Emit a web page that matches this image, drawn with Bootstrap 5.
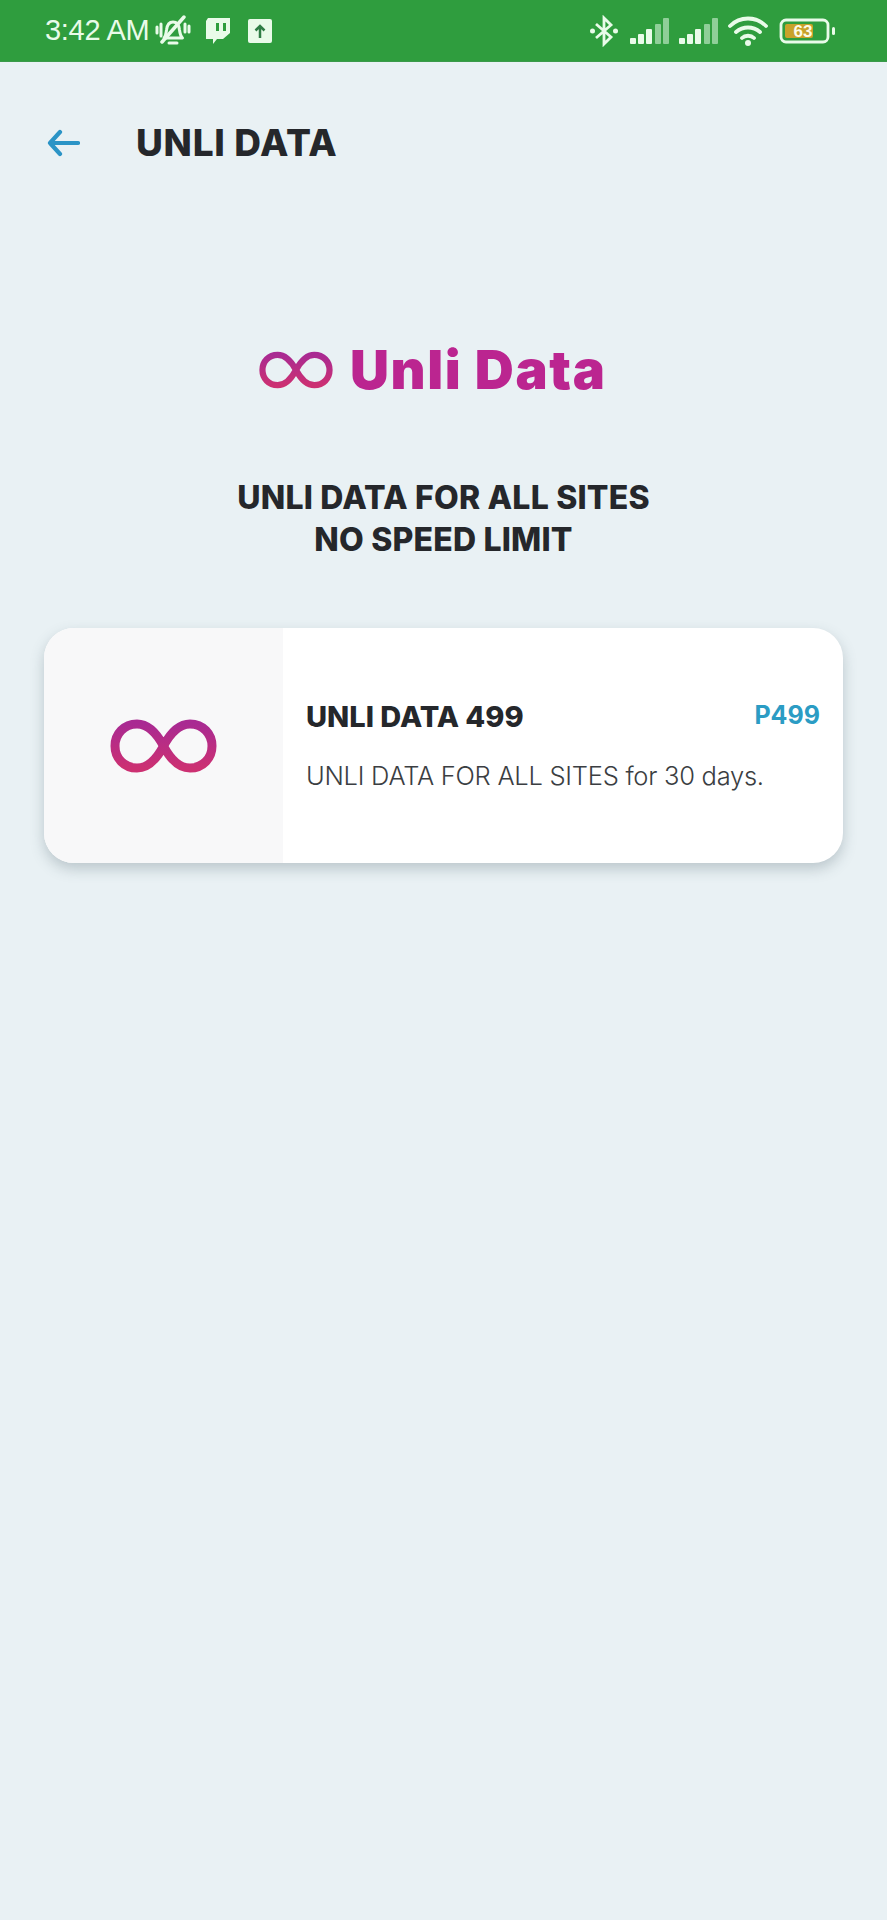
<!doctype html>
<html lang="en">
<head>
<meta charset="utf-8">
<title>Unli Data</title>
<link href="https://cdn.jsdelivr.net/npm/bootstrap@5.3.0/dist/css/bootstrap.min.css" rel="stylesheet">
<style>
html,body{background:#e9f1f4;}
body{width:887px;height:1920px;overflow:hidden;font-family:Inter,"Liberation Sans",sans-serif;color:#25272b;}
.sbar{height:62px;background:#2f9d3e;color:#e9fbe9;padding:0 0 0 45px;border-bottom:1px solid #3a9a4a;}
.sbar-time{font-family:"Liberation Sans",Arial,sans-serif;font-size:29px;letter-spacing:-.3px;line-height:1;margin-right:6px;}
.sbar-right{margin-right:50px;}
.twitch-icon{margin-left:13px;}
.upload-icon{margin-left:17px;}
.signal-a{margin-left:11px;}
.signal-b{margin-left:9px;}
.wifi-icon{margin-left:9px;}
.battery-icon{margin-left:11px;}
.topbar{padding:0 0 0 47px;margin-top:52px;height:58px;}
.topbar-title{font-size:37px;font-weight:800;letter-spacing:.7px;margin:0 0 0 56px;line-height:58px;}
.logo-row{margin-top:168px;padding-left:259px;height:60px;gap:17px;}
.logo-text{font-size:54px;font-weight:900;color:#bb2590;letter-spacing:1.6px;line-height:60px;}
.headline{margin:77px 0 0;font-size:32px;font-weight:800;line-height:42px;letter-spacing:.2px;text-align:center;}
.plan{margin:67px 44px 0;height:235px;border-radius:30px;background:#fff;box-shadow:0 6px 14px rgba(70,90,100,.28);overflow:hidden;}
.plan-art{width:239px;background:#f8f8f9;flex:none;}
.plan-body{padding:0 23px;}
.plan-top{margin-top:71px;}
.plan-name{font-size:29px;font-weight:800;line-height:36px;margin:0;}
.plan-price{font-size:25px;font-weight:700;color:#2b9cc4;line-height:32px;}
.plan-desc{font-size:25.5px;font-weight:300;color:#3b3e42;line-height:34px;margin:24px 0 0;letter-spacing:-.26px;white-space:nowrap;}
</style>
</head>
<body>
<div class="sbar d-flex align-items-center justify-content-between">
  <div class="d-flex align-items-center">
    <span class="sbar-time">3:42 AM</span>
    <svg width="36" height="32" viewBox="0 0 36 32" fill="none" stroke="#e9fbe9" stroke-width="3" stroke-linecap="round" stroke-linejoin="round"><path d="M9 23c2-2 2-5 2.500-8 .6-5 3-8 6.500-8s6 3 6.500 8c.4 3 1 6 3 8z"/><path d="M14 28h8"/><path stroke-width="3.500" d="M7 27 29 2"/><path d="M2 12v6M6 9v12M30 9v8M34 11v6"/></svg>
    <svg class="twitch-icon" width="27" height="30" viewBox="0 0 27 30"><path fill="#e9fbe9" d="M4 2h22v15l-7 6h-6l-4 5v-5H2V5z"/><path fill="#2f9d3e" d="M12 7h3v8h-3zM19 7h3v8h-3z"/></svg>
    <svg class="upload-icon" width="24" height="24" viewBox="0 0 24 24"><rect width="24" height="24" rx="2" fill="#e9fbe9"/><path d="M12 19V7M7.500 11.500 12 7l4.500 4.500" fill="none" stroke="#2f7d45" stroke-width="2.500"/></svg>
  </div>
  <div class="sbar-right d-flex align-items-center">
    <svg width="30" height="32" viewBox="0 0 30 32" fill="none" stroke="#e9fbe9" stroke-width="2.800"><path d="M7 9 22 22 15 29V3l7 7L7 23"/><circle cx="3.500" cy="16" r="2.500" fill="#e9fbe9" stroke="none"/><circle cx="26.500" cy="16" r="2.500" fill="#e9fbe9" stroke="none"/></svg>
    <svg class="signal-a" width="40" height="28" viewBox="0 0 40 28"><g fill="#e9fbe9"><rect x="0" y="21" width="6" height="6" rx="1"/><rect x="8" y="17" width="6" height="10" rx="1"/><rect x="16" y="12" width="6" height="15" rx="1"/></g><g fill="#8fcf98"><rect x="25" y="7" width="6" height="20" rx="1"/><rect x="33" y="1" width="6" height="26" rx="1"/></g></svg>
    <svg class="signal-b" width="40" height="28" viewBox="0 0 40 28"><g fill="#e9fbe9"><rect x="0" y="21" width="6" height="6" rx="1"/><rect x="8" y="17" width="6" height="10" rx="1"/><rect x="16" y="12" width="6" height="15" rx="1"/></g><g fill="#8fcf98"><rect x="25" y="7" width="6" height="20" rx="1"/><rect x="33" y="1" width="6" height="26" rx="1"/></g></svg>
    <svg class="wifi-icon" width="40" height="32" viewBox="0 0 40 32" fill="none" stroke="#e9fbe9" stroke-width="3.800" stroke-linecap="round"><path d="M2 11C12 1 28 1 38 11M8 17c7-6 17-6 24 0M14 23c3-3 9-3 12 0"/><circle cx="20" cy="28" r="3" fill="#e9fbe9" stroke="none"/></svg>
    <svg class="battery-icon" width="58" height="28" viewBox="0 0 58 28"><rect x="2" y="3" width="47" height="22" rx="5" fill="none" stroke="#e9fbe9" stroke-width="2.800"/><rect x="6" y="7" width="28" height="14" rx="2" fill="#c9a22a"/><rect x="53" y="10" width="3" height="8" rx="1.500" fill="#e9fbe9"/><text x="24" y="20" text-anchor="middle" font-family="Liberation Sans" font-size="17" font-weight="700" fill="#fdfbe8">63</text></svg>
  </div>
</div>

<div class="topbar d-flex align-items-center">
  <svg width="33" height="28" viewBox="0 0 33 28" fill="none" stroke="#2b94c6" stroke-width="4.200" stroke-linecap="round" stroke-linejoin="round"><path d="M3 14h28M13 3 3 14l10 11"/></svg>
  <h1 class="topbar-title">UNLI DATA</h1>
</div>

<div class="logo-row d-flex align-items-center">
  <svg width="74" height="38" viewBox="0 0 107 54" fill="none"><defs><linearGradient id="infa" x1="0" y1="0" x2="0" y2="1"><stop offset="0" stop-color="#a92a92"/><stop offset="1" stop-color="#cc3072"/></linearGradient></defs><path d="M53.500 27C46 13 38 5 27 5 14 5 5 15 5 27s9 22 22 22c11 0 19-8 26.500-22S69 5 80 5c13 0 22 10 22 22s-9 22-22 22c-11 0-19-8-26.500-22z" stroke="url(#infa)" stroke-width="9"/></svg>
  <span class="logo-text">Unli Data</span>
</div>

<h2 class="headline">UNLI DATA FOR ALL SITES<br>NO SPEED LIMIT</h2>

<div class="plan d-flex">
  <div class="plan-art d-flex align-items-center justify-content-center">
    <svg width="107" height="54" viewBox="0 0 107 54" fill="none"><defs><linearGradient id="infb" x1="0" y1="0" x2="0" y2="1"><stop offset="0" stop-color="#a92a92"/><stop offset="1" stop-color="#cc3072"/></linearGradient></defs><path d="M53.500 27C46 13 38 5 27 5 14 5 5 15 5 27s9 22 22 22c11 0 19-8 26.500-22S69 5 80 5c13 0 22 10 22 22s-9 22-22 22c-11 0-19-8-26.500-22z" stroke="url(#infb)" stroke-width="9"/></svg>
  </div>
  <div class="plan-body flex-grow-1">
    <div class="plan-top d-flex justify-content-between align-items-start">
      <h3 class="plan-name">UNLI DATA 499</h3>
      <span class="plan-price">P499</span>
    </div>
    <p class="plan-desc">UNLI DATA FOR ALL SITES for 30 days.</p>
  </div>
</div>
<script src="https://cdn.jsdelivr.net/npm/bootstrap@5.3.0/dist/js/bootstrap.bundle.min.js"></script>
</body>
</html>
